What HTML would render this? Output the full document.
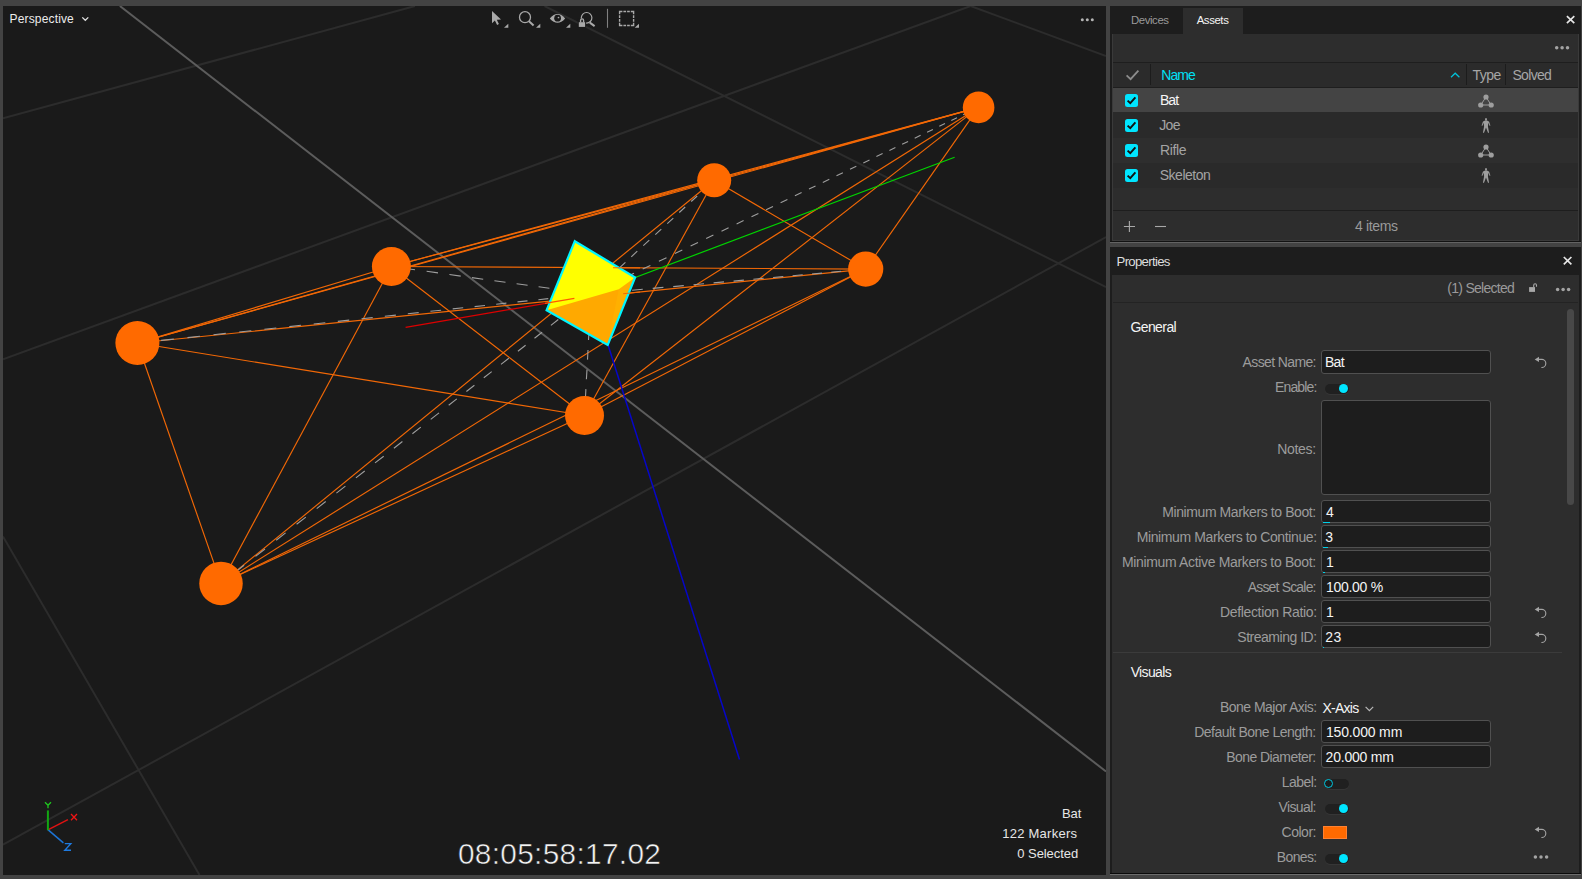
<!DOCTYPE html>
<html lang="en">
<head>
<meta charset="utf-8">
<title>Motive - Perspective View / Assets / Properties</title>
<style>
html,body{margin:0;padding:0;background:#434343;}
body{width:1582px;height:879px;overflow:hidden;font-family:"Liberation Sans",sans-serif;}
#app{position:relative;width:1582px;height:879px;background:#434343;overflow:hidden;}
.abs{position:absolute;}
.t{position:absolute;white-space:nowrap;line-height:16px;font-family:"Liberation Sans",sans-serif;}
#viewport{position:absolute;left:3px;top:6px;width:1103px;height:869px;background:#1a1a1a;overflow:hidden;}
#viewport svg{position:absolute;left:0;top:0;}
.panel{position:absolute;background:#2d2d2d;}
.phead{position:absolute;left:0;top:0;right:0;background:#1d1d1d;}
.hline{position:absolute;height:1px;background:#1f1f1f;}
.vline{position:absolute;width:1px;background:#1f1f1f;}
.row{position:absolute;left:0;right:0;}
.cb{position:absolute;width:13px;height:13px;border-radius:2.5px;background:#00e5ff;}
.inp{position:absolute;box-sizing:border-box;background:#1d1d1d;border:1px solid #505050;border-radius:3px;}
.tog{position:absolute;width:24px;height:10px;border-radius:5px;background:#202020;box-shadow:0 1px 0 #363636;}
.tog i{position:absolute;top:0.5px;width:9px;height:9px;border-radius:50%;background:#00e5ff;}
.tog.off i{box-sizing:border-box;background:#1c1c1c;border:1.2px solid #00c8e0;}
</style>
</head>
<body>
<div id="app">
<div id="viewport">
<svg width="1103" height="869" viewBox="3 6 1103 869">
<g fill="none" stroke="#2c2c2c" stroke-width="2">
<line x1="3" y1="118.4" x2="415" y2="6"/>
<line x1="3" y1="359.2" x2="970.6" y2="6"/>
<line x1="3" y1="844.7" x2="1106" y2="237.1"/>
<line x1="544.5" y1="6" x2="1106" y2="287.1"/>
<line x1="970.6" y1="6" x2="1106" y2="56.1"/>
<line x1="3" y1="536.4" x2="199.5" y2="875"/>
</g>
<line x1="119.9" y1="6" x2="1106" y2="771.5" stroke="#5c5c5c" stroke-width="2"/>
<g fill="none" stroke="#f26806" stroke-width="1.15">
<line x1="978.6" y1="107.4" x2="714.2" y2="180.3"/>
<line x1="978.6" y1="107.4" x2="391.4" y2="266.5"/>
<line x1="978.6" y1="107.4" x2="865.7" y2="269.1"/>
<line x1="978.6" y1="107.4" x2="137.4" y2="343.0"/>
<line x1="978.6" y1="107.4" x2="584.5" y2="415.5"/>
<line x1="978.6" y1="107.4" x2="221.0" y2="583.4"/>
<line x1="714.2" y1="180.3" x2="391.4" y2="266.5"/>
<line x1="714.2" y1="180.3" x2="865.7" y2="269.1"/>
<line x1="714.2" y1="180.3" x2="137.4" y2="343.0"/>
<line x1="714.2" y1="180.3" x2="584.5" y2="415.5"/>
<line x1="714.2" y1="180.3" x2="221.0" y2="583.4"/>
<line x1="391.4" y1="266.5" x2="865.7" y2="269.1"/>
<line x1="391.4" y1="266.5" x2="137.4" y2="343.0"/>
<line x1="391.4" y1="266.5" x2="584.5" y2="415.5"/>
<line x1="391.4" y1="266.5" x2="221.0" y2="583.4"/>
<line x1="865.7" y1="269.1" x2="137.4" y2="343.0"/>
<line x1="865.7" y1="269.1" x2="584.5" y2="415.5"/>
<line x1="865.7" y1="269.1" x2="221.0" y2="583.4"/>
<line x1="137.4" y1="343.0" x2="584.5" y2="415.5"/>
<line x1="137.4" y1="343.0" x2="221.0" y2="583.4"/>
<line x1="584.5" y1="415.5" x2="221.0" y2="583.4"/>
</g>
<g fill="none" stroke="#9e9e9e" stroke-width="1.1">
<path d="M968.8 112.1L963.2 114.8M957.0 117.8L951.3 120.5M945.0 123.6L939.3 126.3M932.9 129.4L927.1 132.2M920.6 135.3L914.7 138.2M908.1 141.4L902.1 144.2M895.4 147.5L889.4 150.4M882.6 153.6L876.4 156.6M869.5 159.9L863.3 162.9M856.3 166.3L850.0 169.3M842.9 172.7L836.5 175.8M829.3 179.3L822.8 182.4M815.5 185.9L809.0 189.1M801.6 192.6L794.9 195.8M787.4 199.5L780.6 202.7M773.0 206.4L766.1 209.7M758.4 213.4L751.5 216.7M743.6 220.5L736.6 223.9M728.6 227.7L721.5 231.2M713.4 235.1L706.2 238.6M698.0 242.5L690.6 246.0M682.3 250.0L674.9 253.6M666.5 257.7L658.9 261.3M650.4 265.4L642.7 269.1M634.0 273.3L626.3 277.0M617.5 281.3L609.6 285.0M600.7 289.3L592.7 293.2"/>
<path d="M709.2 184.9L703.2 190.4M697.2 196.0L691.2 201.5M685.2 207.0L679.3 212.5M673.3 218.1L667.3 223.6M661.3 229.1L655.3 234.7M649.3 240.2L643.3 245.7M637.3 251.2L631.3 256.8M625.4 262.3L619.4 267.8M613.4 273.3L607.4 278.9M601.4 284.4L595.4 289.9"/>
<path d="M403.5 268.2L415.0 269.8M426.6 271.3L438.0 272.9M449.4 274.5L460.7 276.1M472.0 277.6L483.2 279.2M494.4 280.7L505.5 282.2M516.6 283.8L527.6 285.3M538.6 286.8L549.4 288.3M560.3 289.8L571.0 291.3M581.8 292.7L591.0 294.0"/>
<path d="M860.1 269.6L850.2 270.5M841.1 271.3L831.2 272.2M822.0 273.1L812.0 274.0M802.7 274.8L792.6 275.7M783.3 276.6L773.1 277.5M763.7 278.3L753.4 279.3M743.9 280.1L733.6 281.1M724.0 281.9L713.6 282.9M704.0 283.8L693.5 284.7M683.8 285.6L673.2 286.6M663.4 287.4L652.7 288.4M642.8 289.3L632.1 290.3M622.1 291.2L611.3 292.2M601.2 293.1L591.0 294.0"/>
<path d="M161.1 340.4L173.8 339.1M187.5 337.6L200.0 336.2M213.5 334.8L225.8 333.4M239.2 332.0L251.3 330.7M264.4 329.3L276.3 328.0M289.3 326.6L301.0 325.3M313.7 324.0L325.3 322.7M337.8 321.4L349.2 320.1M361.5 318.8L372.7 317.6M384.8 316.3L395.9 315.1M407.8 313.8L418.7 312.6M430.4 311.3L441.1 310.2M452.7 308.9L463.2 307.8M474.6 306.6L485.0 305.5M496.2 304.2L506.4 303.1M517.5 301.9L527.5 300.9M538.4 299.7L548.3 298.6M559.0 297.5L568.7 296.4M579.3 295.3L588.9 294.2"/>
<path d="M585.4 398.7L585.9 389.1M586.4 379.2L587.0 369.6M587.5 359.6L588.0 350.0M588.5 340.0L589.1 330.4M589.6 320.4L590.1 310.8M590.6 300.9L591.0 294.0"/>
<path d="M234.5 572.9L244.1 565.3M255.5 556.4L265.0 549.0M276.2 540.2L285.6 532.9M296.6 524.3L305.8 517.1M316.7 508.6L325.7 501.5M336.4 493.1L345.4 486.1M355.9 477.9L364.7 471.0M375.0 462.9L383.7 456.2M393.9 448.2L402.4 441.5M412.4 433.7L420.8 427.1M430.7 419.4L439.0 412.9M448.7 405.3L456.8 398.9M466.4 391.5L474.4 385.2M483.8 377.8L491.7 371.6M501.0 364.4L508.8 358.3M517.9 351.2L525.6 345.2M534.5 338.2L542.1 332.3M550.9 325.4L558.3 319.5M567.0 312.7L574.3 307.0M582.9 300.3L590.1 294.7"/>
</g>
<line x1="405.6" y1="327.4" x2="574.4" y2="298.4" stroke="#dd0000" stroke-width="1.3"/>
<line x1="600" y1="290.7" x2="954.6" y2="157.2" stroke="#00d400" stroke-width="1.2"/>
<line x1="596" y1="307" x2="739.5" y2="759.5" stroke="#0606c8" stroke-width="1.5"/>
<polygon points="574.8,241.2 635.1,277.5 607.7,345.0 546.6,310.2" fill="#ffa900"/>
<polygon points="618.8,289.2 635.1,277.5 607.7,345.0" fill="#ffb000"/>
<polygon points="574.8,241.2 635.1,277.5 618.8,289.2 546.6,310.2" fill="#ffff00"/>
<polygon points="574.8,241.2 635.1,277.5 607.7,345.0 546.6,310.2" fill="none" stroke="#00f6ff" stroke-width="2.2" stroke-linejoin="miter"/>
<line x1="613" y1="267.7" x2="640" y2="267.9" stroke="#f26806" stroke-width="1.15"/>
<line x1="623.2" y1="293.7" x2="640" y2="292.0" stroke="#f26806" stroke-width="1.15"/>
<line x1="545" y1="303.4" x2="574.4" y2="298.4" stroke="#ff5a00" stroke-width="1.2"/>
<g fill="#ff6a00">
<circle cx="978.6" cy="107.4" r="15.8"/>
<circle cx="714.2" cy="180.3" r="17.0"/>
<circle cx="391.4" cy="266.5" r="19.5"/>
<circle cx="865.7" cy="269.1" r="17.6"/>
<circle cx="137.4" cy="343.0" r="22.0"/>
<circle cx="584.5" cy="415.5" r="19.5"/>
<circle cx="221.0" cy="583.4" r="21.75"/>
</g>
<g fill="none" stroke-linecap="butt">
<line x1="47.9" y1="829.8" x2="67.9" y2="819.6" stroke="#e01212" stroke-width="1.5"/>
<line x1="47.9" y1="829.6" x2="63.4" y2="842.9" stroke="#1c74d6" stroke-width="1.5"/>
<line x1="47.9" y1="830.2" x2="47.9" y2="810.4" stroke="#12a612" stroke-width="2"/>
<path d="M45 802.2 L48 805.3 L51 802.2 M48 805.3 L48 808.2" stroke="#1fc81f" stroke-width="1.3"/>
<path d="M71 814 L77 820.2 M77 814 L71 820.2" stroke="#ee1515" stroke-width="1.3"/>
<path d="M64.8 843.6 L70.8 843.6 L64.8 850.2 L71 850.2" stroke="#1e7ae0" stroke-width="1.4"/>
</g>
</svg>
<span class="t" style="left:6.60px;top:6px;line-height:14px;font-size:12px;color:#ececec;letter-spacing:0.150px;">Perspective</span>
<svg class="abs" style="left:78px;top:10px" width="9" height="6" viewBox="0 0 9 6"><path d="M1.3 1.4 L4.3 4.3 L7.3 1.4" fill="none" stroke="#e0e0e0" stroke-width="1.3"/></svg>
<svg class="abs" style="left:482px;top:0px" width="166" height="28" viewBox="485 6 166 28">
<path d="M492 10.9 L492 23.2 L494.9 20.6 L497.1 25 L498.9 24.1 L496.8 19.8 L501 19.6 Z" fill="#a9a9a9"/>
<path d="M508.3 27.8 L508.3 23.8 L504.0 27.8 Z" fill="#a9a9a9"/>
<circle cx="525" cy="17.2" r="5.5" fill="none" stroke="#a9a9a9" stroke-width="1.3"/><line x1="529" y1="21.3" x2="533.6" y2="25.4" stroke="#a9a9a9" stroke-width="2"/>
<path d="M540.3 27.8 L540.3 23.8 L536.0 27.8 Z" fill="#a9a9a9"/>
<path d="M549.8 18.4 Q557.5 9.8 565.2 18.4 Q557.5 27 549.8 18.4 Z" fill="#a9a9a9"/><circle cx="557.6" cy="18.2" r="3.4" fill="#1a1a1a"/><circle cx="558.5" cy="17.5" r="0.85" fill="#a9a9a9"/>
<path d="M570.3 27.8 L570.3 23.8 L566.0 27.8 Z" fill="#a9a9a9"/>
<circle cx="586.6" cy="17.8" r="5.3" fill="none" stroke="#a9a9a9" stroke-width="1.2"/><line x1="589.8" y1="22.6" x2="594.6" y2="26.1" stroke="#a9a9a9" stroke-width="2"/>
<rect x="577.8" y="18.6" width="8.3" height="9" fill="#1a1a1a"/><rect x="578.8" y="22.2" width="6.3" height="4.7" fill="#a9a9a9"/><path d="M580.6 22.4 V20.4 a1.5 1.5 0 0 1 3 0 V22.4" fill="none" stroke="#a9a9a9" stroke-width="1.4"/>
<line x1="607.5" y1="8.8" x2="607.5" y2="27.8" stroke="#808080" stroke-width="1.1"/>
<rect x="619.6" y="11.5" width="14" height="14" fill="none" stroke="#a9a9a9" stroke-width="1.4" stroke-dasharray="2.8 1 2.7 1 2.7 1 5.6 1 2.7 1 2.7 1 5.6 1 2.7 1 2.7 1 5.6 1 2.7 1 2.7 1 2.8"/>
<path d="M639 27.8 L639 23.8 L634.7 27.8 Z" fill="#a9a9a9"/>
</svg>
<svg class="abs" style="left:1076px;top:10px" width="18" height="8" viewBox="1079 16 18 8"><g fill="#b4b4b4"><circle cx="1082.3" cy="19.8" r="1.5"/><circle cx="1087.3" cy="19.8" r="1.5"/><circle cx="1092.3" cy="19.8" r="1.5"/></g></svg>
<span class="t" style="left:454.91px;top:831px;line-height:33px;font-size:29.8px;color:#f4f4f4;letter-spacing:0.317px;-webkit-text-stroke:0.55px #1a1a1a;">08:05:58:17.02</span>
<span class="t" style="left:1059.05px;top:800px;line-height:15px;font-size:13px;color:#e6e6e6;letter-spacing:-0.157px;">Bat</span>
<span class="t" style="left:999.15px;top:820px;line-height:15px;font-size:13px;color:#e6e6e6;letter-spacing:0.265px;">122 Markers</span>
<span class="t" style="left:1014.35px;top:840px;line-height:15px;font-size:13px;color:#e6e6e6;letter-spacing:-0.070px;">0 Selected</span>
</div>
<div class="panel" id="assets" style="left:1110px;top:6px;width:471px;height:236px;background:#1d1d1d;">
<div class="phead" style="height:28px;"></div>
<div class="abs" style="left:73px;top:2px;width:60px;height:26px;background:#2d2d2d;"></div>
<span class="t" style="left:20.93px;top:8px;line-height:12px;font-size:11.4px;color:#9a9a9a;letter-spacing:-0.401px;">Devices</span>
<span class="t" style="left:86.69px;top:8px;line-height:12px;font-size:11.4px;color:#f4f4f4;letter-spacing:-0.410px;">Assets</span>
<svg class="abs" style="left:455px;top:9px" width="11" height="10" viewBox="1565 15 11 10"><path d="M1566.9 16.2 L1574.3 23.1 M1574.3 16.2 L1566.9 23.1" stroke="#e6e6e6" stroke-width="1.7" fill="none"/></svg>
<div class="abs" style="left:2px;top:28px;width:467px;height:207px;background:#3a3a3a;"></div>
<div class="abs" style="left:3px;top:28px;width:465px;height:206px;background:#2d2d2d;"></div>
<svg class="abs" style="left:443px;top:38px" width="20" height="8" viewBox="1553 44 20 8"><g fill="#a4a4a4"><circle cx="1556.7" cy="47.7" r="1.75"/><circle cx="1562.1" cy="47.7" r="1.75"/><circle cx="1567.5" cy="47.7" r="1.75"/></g></svg>
<div class="hline" style="left:3px;width:465px;top:56px;background:#1e1e1e;"></div>
<div class="hline" style="left:3px;width:465px;top:81px;background:#1e1e1e;"></div>
<div class="abs" style="left:3px;top:57px;width:465px;height:24px;background:#2b2b2b;"></div>
<div class="vline" style="left:40px;top:58px;height:21px;background:#1c1c1c;"></div>
<div class="vline" style="left:355.5px;top:58px;height:21px;background:#1c1c1c;"></div>
<div class="vline" style="left:395px;top:58px;height:21px;background:#1c1c1c;"></div>
<svg class="abs" style="left:14px;top:62px" width="16" height="14" viewBox="1124 68 16 14"><path d="M1126.6 75.4 L1130.6 79.2 L1138.4 70.6" fill="none" stroke="#8c8c8c" stroke-width="1.8"/></svg>
<span class="t" style="left:51.22px;top:61px;line-height:16px;font-size:14px;color:#00e0f5;letter-spacing:-0.949px;">Name</span>
<svg class="abs" style="left:339px;top:65px" width="12" height="8" viewBox="1449 71 12 8"><path d="M1451 77.2 L1455.2 73.2 L1459.4 77.2" fill="none" stroke="#00c4dc" stroke-width="1.2"/></svg>
<span class="t" style="left:362.40px;top:61px;line-height:16px;font-size:14px;color:#a6a6a6;letter-spacing:-0.484px;">Type</span>
<span class="t" style="left:402.40px;top:61px;line-height:16px;font-size:14px;color:#a6a6a6;letter-spacing:-0.662px;">Solved</span>
<div class="row" style="left:3px;right:3px;top:82px;height:24px;background:#444444;"></div>
<div class="cb" style="left:15px;top:88.0px"><svg width="13" height="13" viewBox="0 0 13 13" style="position:absolute;left:0;top:0"><path d="M2.6 6.6 L5.3 9.2 L10.4 3.4" fill="none" stroke="#101010" stroke-width="1.9"/></svg></div>
<span class="t" style="left:49.90px;top:86px;line-height:16px;font-size:14px;color:#f6f6f6;letter-spacing:-0.857px;">Bat</span>
<svg class="abs" style="left:366.5px;top:86.5px" width="18" height="16" viewBox="1476.5 92.5 18 16"><path d="M1485.5 96.5 L1480.2 104.5 L1490.7 104.5 Z" fill="none" stroke="#9e9e9e" stroke-width="1"/><g fill="#9e9e9e"><circle cx="1485.5" cy="96.5" r="2.6"/><circle cx="1480.2" cy="104.5" r="2.6"/><circle cx="1490.7" cy="104.5" r="2.6"/></g></svg>
<div class="row" style="left:3px;right:3px;top:106px;height:26px;background:#2a2a2a;"></div>
<div class="cb" style="left:15px;top:113.0px"><svg width="13" height="13" viewBox="0 0 13 13" style="position:absolute;left:0;top:0"><path d="M2.6 6.6 L5.3 9.2 L10.4 3.4" fill="none" stroke="#101010" stroke-width="1.9"/></svg></div>
<span class="t" style="left:49.30px;top:111px;line-height:16px;font-size:14px;color:#a4a4a4;letter-spacing:-0.686px;">Joe</span>
<svg class="abs" style="left:369.5px;top:111px" width="12" height="17" viewBox="1479.5 117 12 17"><g fill="#9e9e9e"><ellipse cx="1485.5" cy="119.3" rx="0.95" ry="1.35"/><path d="M1485.5 120.3 L1487.6 120.9 L1488.6 121.8 L1489.9 125.6 L1489.2 126 L1487.9 122.8 L1487.4 126.3 L1488.5 132.6 L1487.6 132.9 L1485.5 127.6 L1483.4 132.9 L1482.5 132.6 L1483.6 126.3 L1483.1 122.8 L1481.8 126 L1481.1 125.6 L1482.4 121.8 L1483.4 120.9 Z"/></g></svg>
<div class="row" style="left:3px;right:3px;top:132px;height:25px;background:#2e2e2e;"></div>
<div class="cb" style="left:15px;top:138.0px"><svg width="13" height="13" viewBox="0 0 13 13" style="position:absolute;left:0;top:0"><path d="M2.6 6.6 L5.3 9.2 L10.4 3.4" fill="none" stroke="#101010" stroke-width="1.9"/></svg></div>
<span class="t" style="left:50.00px;top:136px;line-height:16px;font-size:14px;color:#a4a4a4;letter-spacing:-0.377px;">Rifle</span>
<svg class="abs" style="left:366.5px;top:136.5px" width="18" height="16" viewBox="1476.5 92.5 18 16"><path d="M1485.5 96.5 L1480.2 104.5 L1490.7 104.5 Z" fill="none" stroke="#9e9e9e" stroke-width="1"/><g fill="#9e9e9e"><circle cx="1485.5" cy="96.5" r="2.6"/><circle cx="1480.2" cy="104.5" r="2.6"/><circle cx="1490.7" cy="104.5" r="2.6"/></g></svg>
<div class="row" style="left:3px;right:3px;top:157px;height:25px;background:#2a2a2a;"></div>
<div class="cb" style="left:15px;top:163.0px"><svg width="13" height="13" viewBox="0 0 13 13" style="position:absolute;left:0;top:0"><path d="M2.6 6.6 L5.3 9.2 L10.4 3.4" fill="none" stroke="#101010" stroke-width="1.9"/></svg></div>
<span class="t" style="left:49.80px;top:161px;line-height:16px;font-size:14px;color:#a4a4a4;letter-spacing:-0.512px;">Skeleton</span>
<svg class="abs" style="left:369.5px;top:161px" width="12" height="17" viewBox="1479.5 117 12 17"><g fill="#9e9e9e"><ellipse cx="1485.5" cy="119.3" rx="0.95" ry="1.35"/><path d="M1485.5 120.3 L1487.6 120.9 L1488.6 121.8 L1489.9 125.6 L1489.2 126 L1487.9 122.8 L1487.4 126.3 L1488.5 132.6 L1487.6 132.9 L1485.5 127.6 L1483.4 132.9 L1482.5 132.6 L1483.6 126.3 L1483.1 122.8 L1481.8 126 L1481.1 125.6 L1482.4 121.8 L1483.4 120.9 Z"/></g></svg>
<div class="hline" style="left:3px;width:465px;top:204px;background:#1e1e1e;"></div>
<svg class="abs" style="left:12px;top:214px" width="50" height="14" viewBox="1122 220 50 14"><g stroke="#a8a8a8" stroke-width="1.1" fill="none"><path d="M1123.9 226.5 H1135 M1129.4 220.9 V232.1"/><path d="M1155 226.5 H1166"/></g></svg>
<span class="t" style="left:245.10px;top:212px;line-height:16px;font-size:14px;color:#9a9a9a;letter-spacing:-0.374px;">4 items</span>
</div>
<div class="abs" style="left:1110px;top:241px;width:471px;height:1px;background:#121212;"></div>
<div class="abs" style="left:1110px;top:242px;width:471px;height:1px;background:#636363;"></div>
<div class="panel" id="props" style="left:1110px;top:247px;width:471px;height:626px;background:#1d1d1d;">
<div class="phead" style="height:28px;"></div>
<span class="t" style="left:6.54px;top:7px;line-height:15px;font-size:13.2px;color:#dedede;letter-spacing:-0.694px;">Properties</span>
<svg class="abs" style="left:452px;top:8px" width="11" height="11" viewBox="1562 255 11 11"><path d="M1563.8 257 L1571.4 264.4 M1571.4 257 L1563.8 264.4" stroke="#e6e6e6" stroke-width="1.7" fill="none"/></svg>
<div class="abs" style="left:2px;top:28px;width:467px;height:598px;background:#2d2d2d;"></div>
<span class="t" style="left:337.30px;top:33px;line-height:16px;font-size:14px;color:#9a9a9a;letter-spacing:-0.726px;">(1) Selected</span>
<svg class="abs" style="left:417px;top:35px" width="12" height="12" viewBox="1527 282 12 12"><rect x="1529.1" y="287.1" width="5.9" height="4.8" fill="#a8a8a8"/><path d="M1533.7 287.3 V285.2 a1.4 1.4 0 0 1 2.8 0 V286.8" fill="none" stroke="#a8a8a8" stroke-width="1.1"/></svg>
<svg class="abs" style="left:443px;top:38px" width="20" height="8" viewBox="1553 285 20 8"><g fill="#a4a4a4"><circle cx="1557.6" cy="289.6" r="1.75"/><circle cx="1563.1" cy="289.6" r="1.75"/><circle cx="1568.6" cy="289.6" r="1.75"/></g></svg>
<div class="hline" style="left:3px;width:465px;top:55px;background:#232323;"></div>
<div class="abs" style="left:457px;top:62px;width:7px;height:196px;border-radius:3.5px;background:#484848;"></div>
<span class="t" style="left:20.40px;top:72px;line-height:16px;font-size:14px;color:#f4f4f4;letter-spacing:-0.585px;">General</span>
<span class="t" style="left:20.70px;top:417px;line-height:16px;font-size:14px;color:#f4f4f4;letter-spacing:-0.653px;">Visuals</span>
<div class="hline" style="left:3px;width:449px;top:405px;background:#3b3b3b;"></div>
<span class="t" style="left:132.60px;top:107px;line-height:16px;font-size:14px;color:#9c9c9c;letter-spacing:-0.624px;">Asset Name:</span>
<div class="inp" style="left:211px;top:103px;width:170px;height:24px;"></div>
<span class="t" style="left:214.90px;top:107px;line-height:16px;font-size:14px;color:#f4f4f4;letter-spacing:-0.607px;">Bat</span>
<svg class="abs" style="left:423px;top:108.0px" width="15" height="15" viewBox="0 0 15 15"><path d="M6 4.4 H9.1 A4 4 0 0 1 8.4 12.5" fill="none" stroke="#a4a4a4" stroke-width="1.15"/><path d="M1.7 4.4 L6 1.7 V7.1 Z" fill="#a4a4a4"/></svg>
<span class="t" style="left:165.10px;top:132px;line-height:16px;font-size:14px;color:#9c9c9c;letter-spacing:-0.881px;">Enable:</span>
<div class="tog" style="left:214.6px;top:136.6px;"><i style="left:14.8px"></i></div>
<span class="t" style="left:167.22px;top:194px;line-height:16px;font-size:14px;color:#9c9c9c;letter-spacing:-0.300px;">Notes:</span>
<div class="inp" style="left:211px;top:153px;width:170px;height:95px;"></div>
<span class="t" style="left:52.22px;top:257px;line-height:16px;font-size:14px;color:#9c9c9c;letter-spacing:-0.409px;">Minimum Markers to Boot:</span>
<div class="inp" style="left:211px;top:253px;width:170px;height:23px;"></div>
<div class="abs" style="left:212.6px;top:274.8px;width:7px;height:1.2px;background:#00d0e8;"></div>
<span class="t" style="left:216.10px;top:257px;line-height:16px;font-size:14px;color:#f4f4f4;letter-spacing:1.400px;">4</span>
<span class="t" style="left:26.68px;top:282px;line-height:16px;font-size:14px;color:#9c9c9c;letter-spacing:-0.376px;">Minimum Markers to Continue:</span>
<div class="inp" style="left:211px;top:278px;width:170px;height:23px;"></div>
<div class="abs" style="left:212.6px;top:299.8px;width:5px;height:1.2px;background:#00d0e8;"></div>
<span class="t" style="left:215.30px;top:282px;line-height:16px;font-size:14px;color:#f4f4f4;letter-spacing:1.400px;">3</span>
<span class="t" style="left:12.00px;top:307px;line-height:16px;font-size:14px;color:#9c9c9c;letter-spacing:-0.348px;">Minimum Active Markers to Boot:</span>
<div class="inp" style="left:211px;top:303px;width:170px;height:23px;"></div>
<div class="abs" style="left:212.6px;top:324.8px;width:2.4px;height:1.2px;background:#00d0e8;"></div>
<span class="t" style="left:215.90px;top:307px;line-height:16px;font-size:14px;color:#f4f4f4;letter-spacing:1.400px;">1</span>
<span class="t" style="left:137.70px;top:332px;line-height:16px;font-size:14px;color:#9c9c9c;letter-spacing:-0.820px;">Asset Scale:</span>
<div class="inp" style="left:211px;top:328px;width:170px;height:23px;"></div>
<span class="t" style="left:215.90px;top:332px;line-height:16px;font-size:14px;color:#f4f4f4;letter-spacing:-0.280px;">100.00 %</span>
<span class="t" style="left:110.04px;top:357px;line-height:16px;font-size:14px;color:#9c9c9c;letter-spacing:-0.351px;">Deflection Ratio:</span>
<div class="inp" style="left:211px;top:353px;width:170px;height:23px;"></div>
<span class="t" style="left:215.90px;top:357px;line-height:16px;font-size:14px;color:#f4f4f4;letter-spacing:1.400px;">1</span>
<span class="t" style="left:127.30px;top:382px;line-height:16px;font-size:14px;color:#9c9c9c;letter-spacing:-0.479px;">Streaming ID:</span>
<div class="inp" style="left:211px;top:378px;width:170px;height:23px;"></div>
<div class="abs" style="left:212.6px;top:399.8px;width:1.4px;height:1.2px;background:#00d0e8;"></div>
<span class="t" style="left:215.30px;top:382px;line-height:16px;font-size:14px;color:#f4f4f4;letter-spacing:0.427px;">23</span>
<svg class="abs" style="left:423px;top:358.1px" width="15" height="15" viewBox="0 0 15 15"><path d="M6 4.4 H9.1 A4 4 0 0 1 8.4 12.5" fill="none" stroke="#a4a4a4" stroke-width="1.15"/><path d="M1.7 4.4 L6 1.7 V7.1 Z" fill="#a4a4a4"/></svg>
<svg class="abs" style="left:423px;top:383.1px" width="15" height="15" viewBox="0 0 15 15"><path d="M6 4.4 H9.1 A4 4 0 0 1 8.4 12.5" fill="none" stroke="#a4a4a4" stroke-width="1.15"/><path d="M1.7 4.4 L6 1.7 V7.1 Z" fill="#a4a4a4"/></svg>
<span class="t" style="left:110.04px;top:452px;line-height:16px;font-size:14px;color:#9c9c9c;letter-spacing:-0.530px;">Bone Major Axis:</span>
<span class="t" style="left:212.40px;top:453px;line-height:16px;font-size:14px;color:#f4f4f4;letter-spacing:-0.734px;">X-Axis</span>
<svg class="abs" style="left:254px;top:458px" width="11" height="8" viewBox="1364 705 11 8"><path d="M1365.6 706.8 L1369.4 710.6 L1373.2 706.8" fill="none" stroke="#b8b8b8" stroke-width="1.2"/></svg>
<span class="t" style="left:84.22px;top:477px;line-height:16px;font-size:14px;color:#9c9c9c;letter-spacing:-0.505px;">Default Bone Length:</span>
<div class="inp" style="left:211px;top:473px;width:170px;height:23px;"></div>
<span class="t" style="left:215.90px;top:477px;line-height:16px;font-size:14px;color:#f4f4f4;letter-spacing:-0.158px;">150.000 mm</span>
<span class="t" style="left:116.22px;top:502px;line-height:16px;font-size:14px;color:#9c9c9c;letter-spacing:-0.562px;">Bone Diameter:</span>
<div class="inp" style="left:211px;top:498.3px;width:170px;height:23px;"></div>
<span class="t" style="left:215.60px;top:502px;line-height:16px;font-size:14px;color:#f4f4f4;letter-spacing:-0.205px;">20.000 mm</span>
<span class="t" style="left:171.68px;top:527px;line-height:16px;font-size:14px;color:#9c9c9c;letter-spacing:-0.537px;">Label:</span>
<div class="tog off" style="left:214.6px;top:531.7px;"><i style="left:-0.3px"></i></div>
<span class="t" style="left:168.50px;top:552px;line-height:16px;font-size:14px;color:#9c9c9c;letter-spacing:-0.628px;">Visual:</span>
<div class="tog" style="left:214.6px;top:556.8px;"><i style="left:14.8px"></i></div>
<span class="t" style="left:171.50px;top:577px;line-height:16px;font-size:14px;color:#9c9c9c;letter-spacing:-0.469px;">Color:</span>
<div class="abs" style="left:213px;top:579.2px;box-sizing:border-box;width:24px;height:12.5px;background:#ff6a00;border:1px solid #ff8130;"></div>
<svg class="abs" style="left:423px;top:578.3px" width="15" height="15" viewBox="0 0 15 15"><path d="M6 4.4 H9.1 A4 4 0 0 1 8.4 12.5" fill="none" stroke="#a4a4a4" stroke-width="1.15"/><path d="M1.7 4.4 L6 1.7 V7.1 Z" fill="#a4a4a4"/></svg>
<span class="t" style="left:166.86px;top:602px;line-height:16px;font-size:14px;color:#9c9c9c;letter-spacing:-0.661px;">Bones:</span>
<div class="tog" style="left:214.6px;top:606.7px;"><i style="left:14.8px"></i></div>
<svg class="abs" style="left:421px;top:606px" width="20" height="8" viewBox="1531 853 20 8"><g fill="#a4a4a4"><circle cx="1535.4" cy="857" r="1.75"/><circle cx="1541" cy="857" r="1.75"/><circle cx="1546.6" cy="857" r="1.75"/></g></svg>
</div>
<div class="abs" style="left:1110px;top:873px;width:471px;height:1px;background:#0a0a0a;"></div>
<div class="abs" style="left:1110px;top:874px;width:471px;height:1px;background:#6c6c6c;"></div>
</div>
</body>
</html>
